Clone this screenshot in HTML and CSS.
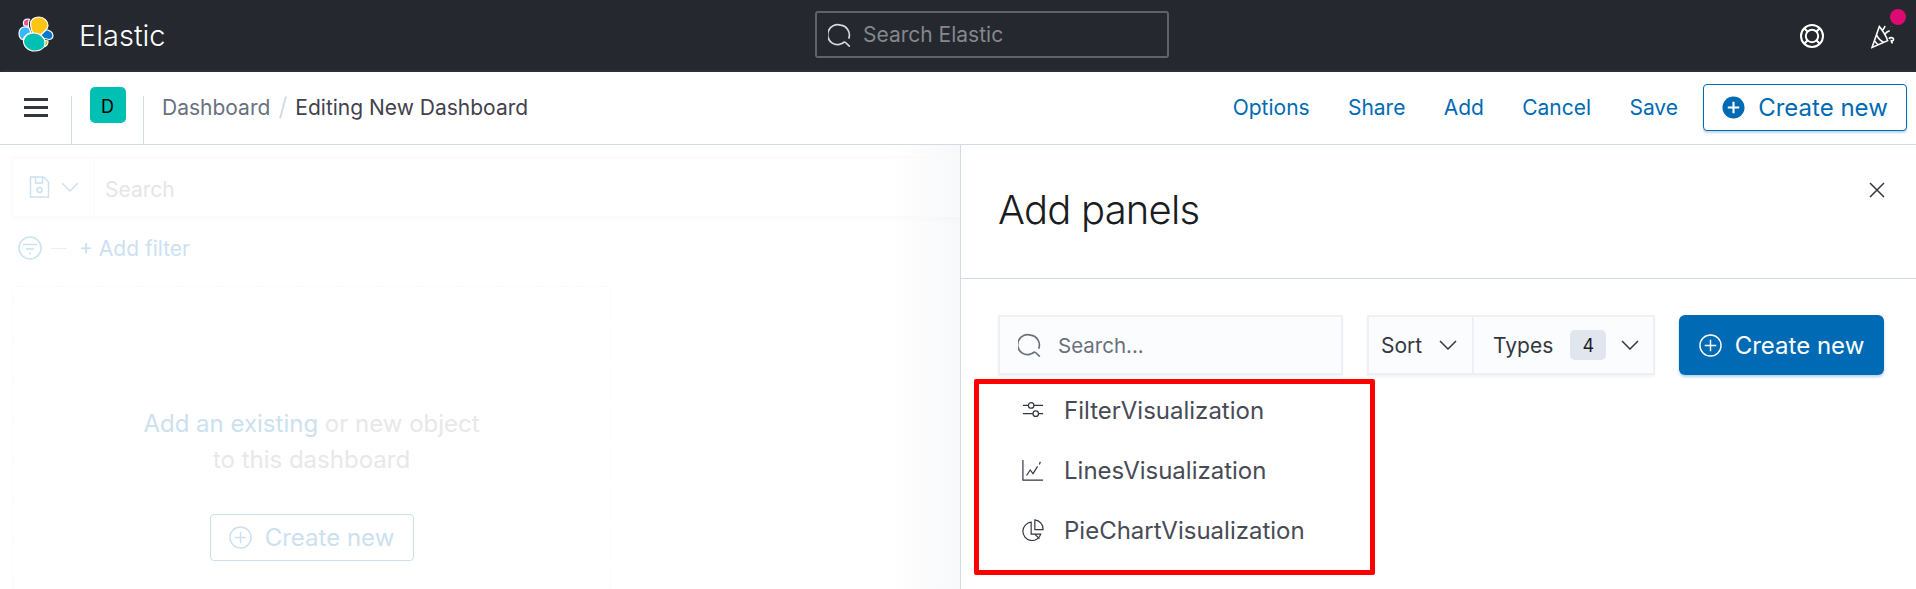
FILE: index.html
```html
<!DOCTYPE html>
<html lang="en">

<head>
	<meta charset="UTF-8">
	<meta name="viewport" content="width=device-width, initial-scale=1.0">
	<title>Editing New Dashboard - Elastic</title>
	<link rel="stylesheet" href="styles.css">
</head>

<body>

	<!-- Dark top bar -->
	<header class="topbar">
		<div class="brand">
			<svg class="brand-logo" viewBox="0 0 36 36" aria-hidden="true">
				<path fill="#f04e98" d="M5.500 6C6 3.500 9 2.500 11.500 3.300 10.500 5 10 7.500 10.500 10.500L6 9.500C5.500 8.500 5.300 7 5.500 6z" />
				<path fill="#36b9ff" d="M1 17C1 13 4 10.800 7 10.800 8.500 10.800 10 11.200 11 12L13 16.500C9 17.500 6.500 20 5 23.800 2.500 23 1 20 1 17z" />
				<path fill="#0077cc" d="M27.500 13.500C31.500 14 35 16.500 35 19.500 35 21.500 33.500 23 31.500 23.500L24 22 22 19.800z" />
				<path fill="#93c90e" d="M23.500 24L30 25C30.300 28 28.500 31 25 31L24 30.500C24.500 28 24 26 23.500 24z" />
				<path fill="#fec514" d="M12.500 8C12.500 3.500 16.500 1 21 1 26 1 30 5 30 9.500 30 11.500 29 13 27.500 14.500 25 17 22.500 19 21 20 19 18 17 17 14.500 16.800 13.500 14 12.500 11 12.500 8z" />
				<path fill="#00bfb3" d="M5.500 24C7 19.500 11.500 17 16 17 22 17 27 21.500 27 27 27 28.500 26.500 30 26 31 24 33.500 20.500 35 16.500 35 10 35 5 30 5.500 24z" />
			</svg>
			<span class="brand-name">Elastic</span>
		</div>
		<div class="global-search">
			<svg class="icon-search" viewBox="0 0 24 24" aria-hidden="true">
				<path d="M16.800 18.700A10 10 0 1 1 12.500 2.100a10 10 0 0 1 8.200 13.500M17 19l4.800 4.600" />
			</svg>
			<span>Search Elastic</span>
		</div>
		<div class="top-actions">
			<svg class="icon-help" viewBox="0 0 24 24" aria-hidden="true">
				<circle cx="12" cy="12" r="11" />
				<circle cx="12" cy="12" r="6.200" />
				<path d="M4.200 4.200l3.500 3.500M19.800 4.200l-3.500 3.500M4.200 19.800l3.500-3.500M19.800 19.800l-3.500-3.500" />
			</svg>
			<span class="news">
				<svg class="icon-party" viewBox="0 0 24 24" aria-hidden="true">
					<path d="M8 2.500L1 22.500l15-6.500c-1-3-2-6-8-13.500zM5.300 10.500c1.500 3 3.300 6 7 7M3.300 16c1 1.500 2 3 4 4" />
					<path d="M11 6c1-1.500 2-2.500 2.500-4M13 10c2-2.500 3-3 5-3.500M16 4.500l.1.100M19 2.500l.1.100M20.500 5l.1.100M17 14c2-1.500 4-1 4.500 0 .5 1.500-.5 2.500-2 2 0 1 .5 2 1.500 2" />
				</svg>
				<span class="news-dot"></span>
			</span>
		</div>
	</header>

	<!-- Breadcrumb bar -->
	<nav class="navbar">
		<button class="nav-cell nav-toggle" aria-label="Toggle navigation">
			<span></span>
			<span></span>
			<span></span>
		</button>
		<div class="nav-cell nav-space">
			<span class="space-tile">D</span>
		</div>
		<div class="crumbs">
			<span class="crumb-link">Dashboard</span>
			<span class="crumb-sep"></span>
			<span class="crumb-current">Editing New Dashboard</span>
		</div>
		<ul class="menu">
			<li>Options</li>
			<li>Share</li>
			<li>Add</li>
			<li>Cancel</li>
			<li>Save</li>
		</ul>
		<button class="btn-outline btn-top">
			<svg class="icon-plus-filled" viewBox="0 0 24 24" aria-hidden="true">
				<circle cx="12" cy="12" r="11.500" />
				<path d="M12 6v12M6 12h12" />
			</svg>
			Create new
		</button>
	</nav>

	<div class="workspace">

		<!-- Dashboard behind the flyout, faded out -->
		<main class="dash">
			<div class="query-bar">
				<div class="query-save">
					<svg class="icon-save" viewBox="0 0 20 22" aria-hidden="true">
						<path d="M1 1h13l5 5v15H1zM6 1v6h7V1" />
						<circle cx="10" cy="14" r="2.500" />
					</svg>
					<svg class="icon-chevron" viewBox="0 0 18 10" aria-hidden="true">
						<path d="M1 1l8 8 8-8" />
					</svg>
				</div>
				<span class="query-text">Search</span>
			</div>
			<div class="filter-row">
				<svg class="icon-filter" viewBox="0 0 24 24" aria-hidden="true">
					<circle cx="12" cy="12" r="11" />
					<path d="M5 8.500h14M8 13h8M11 17.500h2" />
				</svg>
				<span class="filter-dash"></span>
				<span class="filter-add">+ Add filter</span>
			</div>
			<div class="empty-panel">
				<p class="empty-text"><span class="empty-link">Add an existing</span> or new object<br>to this dashboard</p>
				<button class="btn-outline btn-empty">
					<svg class="icon-plus" viewBox="0 0 24 24" aria-hidden="true">
						<circle cx="12" cy="12" r="11" />
						<path d="M12 6v12M6 12h12" />
					</svg>
					Create new
				</button>
			</div>
		</main>

		<!-- Add panels flyout -->
		<aside class="flyout">
			<div class="flyout-head">
				<h1>Add panels</h1>
				<svg class="icon-close" viewBox="0 0 16 16" aria-hidden="true">
					<path d="M1 1l14 14M15 1L1 15" />
				</svg>
			</div>
			<div class="flyout-body">
				<div class="tools">
					<div class="panel-search">
						<svg class="icon-search" viewBox="0 0 24 24" aria-hidden="true">
							<path d="M16.800 18.700A10 10 0 1 1 12.500 2.100a10 10 0 0 1 8.200 13.500M17 19l4.800 4.600" />
						</svg>
						<span>Search...</span>
					</div>
					<div class="filter-group">
						<div class="filter-item filter-sort">
							Sort
							<svg class="icon-chevron" viewBox="0 0 18 10" aria-hidden="true">
								<path d="M1 1l8 8 8-8" />
							</svg>
						</div>
						<div class="filter-item filter-types">
							Types
							<span class="count">4</span>
							<svg class="icon-chevron" viewBox="0 0 18 10" aria-hidden="true">
								<path d="M1 1l8 8 8-8" />
							</svg>
						</div>
					</div>
					<button class="btn-fill">
						<svg class="icon-plus" viewBox="0 0 24 24" aria-hidden="true">
							<circle cx="12" cy="12" r="11" />
							<path d="M12 6v12M6 12h12" />
						</svg>
						Create new
					</button>
				</div>
				<ul class="vis-list">
					<li>
						<svg class="icon-vis" viewBox="0 0 24 24" aria-hidden="true">
							<path d="M1 7h6M13 7h10M1 16h11M18 16h5" />
							<circle cx="10" cy="7" r="3" />
							<circle cx="15" cy="16" r="3" />
						</svg>
						FilterVisualization
					</li>
					<li>
						<svg class="icon-vis" viewBox="0 0 24 24" aria-hidden="true">
							<path d="M1 1v22h22" />
							<path d="M5 18l4-6 3 4 5-8M20 3l-1 3" />
						</svg>
						LinesVisualization
					</li>
					<li>
						<svg class="icon-vis" viewBox="0 0 24 24" aria-hidden="true">
							<path d="M10 3.500a10 10 0 1 0 10.500 13H10z" />
							<path d="M14 1v10.500h9A10 10 0 0 0 14 1zM14 16.500l5 5" />
						</svg>
						PieChartVisualization
					</li>
				</ul>
			</div>
			<div class="callout"></div>
		</aside>

	</div>

</body>

</html>
```

FILE: styles.css
```css
* {
	box-sizing: border-box;
}

html,
body {
	height: 100%;
}

body {
	margin: 0;
	height: 589px;
	overflow: hidden;
	font-family: Inter, "Liberation Sans", sans-serif;
	font-size: 21px;
	color: #343741;
	background-color: #fff;
}

svg {
	flex: none;
	display: block;
	fill: none;
	stroke: currentColor;
	stroke-width: 1.5;
}

button {
	font: inherit;
	cursor: pointer;
}

ul {
	list-style: none;
	margin: 0;
	padding: 0;
}

/* top bar */
.topbar {
	display: flex;
	align-items: center;
	height: 72px;
	background-color: #25282f;
	color: #fff;
}

.brand {
	display: flex;
	align-items: center;
	gap: 25px;
	width: 815px;
	padding-left: 18px;
}

.brand-logo {
	width: 36px;
	height: 36px;
	margin-bottom: 4px;
	stroke: #fff;
	stroke-width: 1.200;
	overflow: visible;
}

.brand-name {
	font-size: 29px;
	font-weight: 300;
	margin-bottom: 2px;
}

.global-search {
	display: flex;
	align-items: center;
	gap: 11px;
	width: 354px;
	height: 47px;
	margin-bottom: 3px;
	padding-left: 11px;
	border: 2px solid #5f6269;
	border-radius: 3px;
	color: #84878c;
}

.global-search .icon-search {
	color: #d8d9db;
}

.icon-search {
	width: 24px;
	height: 24px;
	stroke-width: 1.700;
}

.top-actions {
	display: flex;
	align-items: center;
	gap: 47px;
	margin-left: auto;
	padding-right: 20px;
}

.icon-help {
	width: 24px;
	height: 24px;
	stroke-width: 2;
}

.news {
	position: relative;
	display: block;
}

.icon-party {
	width: 25px;
	height: 25px;
	stroke-width: 1.500;
}

.news-dot {
	position: absolute;
	top: -15px;
	right: -10px;
	width: 16px;
	height: 16px;
	border-radius: 50%;
	background-color: #dd0a73;
}

/* breadcrumb bar */
.navbar {
	display: flex;
	align-items: center;
	height: 73px;
	border-bottom: 1px solid #d3dae6;
	box-shadow: 0 2px 6px rgba(152, 162, 179, 0.35);
	position: relative;
}

.nav-cell {
	display: flex;
	align-items: center;
	justify-content: center;
	align-self: flex-end;
	height: 48px;
	border: 0;
	background: none;
	border-right: 1px solid #d3dae6;
	padding: 0;
}

.nav-toggle {
	flex-direction: column;
	gap: 5px;
	width: 72px;
	padding-bottom: 25px;
}

.nav-toggle span {
	width: 24px;
	height: 3px;
	background-color: #343741;
}

.nav-space {
	width: 72px;
	padding-bottom: 0;
}

.space-tile {
	display: flex;
	align-items: center;
	justify-content: center;
	width: 36px;
	height: 36px;
	margin-top: -30px;
	padding-top: 2px;
	border-radius: 5px;
	background-color: #00bfb3;
	color: #000;
	font-size: 18px;
}

.crumbs {
	display: flex;
	align-items: center;
	margin-bottom: 2px;
	padding-left: 18px;
}

.crumb-link {
	color: #69707d;
}

.crumb-sep {
	width: 2px;
	height: 23px;
	margin: 0 11.500px;
	background-color: #d3dae6;
	transform: rotate(15deg);
}

.crumb-current {
	color: #3f424c;
}

.menu {
	display: flex;
	gap: 38.300px;
	margin: 0 25px 2px auto;
	color: #006bb4;
}

.btn-outline {
	display: flex;
	align-items: center;
	justify-content: center;
	gap: 13px;
	width: 204px;
	height: 47px;
	border: 1px solid #006bb4;
	border-radius: 4px;
	background-color: #fff;
	color: #006bb4;
	box-shadow: 0 2px 2px rgba(0, 107, 180, 0.25);
}

.btn-top {
	margin-right: 9px;
	margin-top: -2px;
	font-size: 24px;
}

.icon-plus-filled {
	width: 23px;
	height: 23px;
	fill: #006bb4;
	stroke: #fff;
	stroke-width: 2.200;
}

.icon-plus-filled circle {
	stroke: none;
}

.icon-plus {
	width: 23px;
	height: 23px;
}

/* faded dashboard */
.workspace {
	display: flex;
	height: 444px;
}

.dash {
	position: relative;
	width: 960px;
	flex: none;
	padding: 12px 0 0 12px;
	background: linear-gradient(to right, #fff 93%, #f7f8fa);
}

.query-bar {
	display: flex;
	align-items: center;
	height: 60px;
	border: 1px solid #fafafb;
	border-right: 0;
	box-shadow: 0 2px 4px rgba(152, 162, 179, 0.05);
}

.query-save {
	display: flex;
	align-items: center;
	gap: 11px;
	width: 82px;
	height: 100%;
	padding-left: 16px;
	border-right: 1px solid #f8f9fa;
	color: #cce1f0;
}

.icon-save {
	width: 21px;
	height: 22px;
}

.icon-chevron {
	width: 18px;
	height: 10px;
}

.query-text {
	margin: 4px 0 0 10px;
	color: #e5e6e8;
}

.filter-row {
	display: flex;
	align-items: center;
	height: 46px;
	margin-top: 8px;
	padding-left: 6px;
	color: #cce1f0;
}

.icon-filter {
	width: 24px;
	height: 24px;
}

.filter-dash {
	width: 16px;
	height: 1px;
	margin: 0 12px 0 9px;
	background-color: #eceef1;
}

.empty-panel {
	display: flex;
	flex-direction: column;
	align-items: center;
	width: 599px;
	height: 320px;
	margin-top: 15px;
	padding-top: 119px;
	border: 1px dashed #f8f9fa;
	border-bottom: 0;
	border-radius: 4px 4px 0 0;
}

.empty-text {
	margin: 0;
	text-align: center;
	line-height: 36px;
	font-size: 24px;
	color: #e8e8ea;
}

.empty-link {
	color: #cce1f0;
}

.btn-empty {
	margin-top: 36px;
	border-color: #cce1f0;
	color: #cce1f0;
	box-shadow: none;
	font-size: 24px;
}

/* flyout */
.flyout {
	position: relative;
	flex: 1;
	border-left: 1px solid #d3dae6;
	background-color: #fff;
}

.flyout-head {
	position: relative;
	height: 134px;
	padding: 37px 0 0 37px;
	border-bottom: 1px solid #d3dae6;
}

.flyout-head h1 {
	margin: 0;
	font-size: 40px;
	font-weight: 300;
	line-height: 56px;
	letter-spacing: -0.800px;
	color: #1a1c21;
}

.icon-close {
	position: absolute;
	top: 37px;
	right: 31px;
	width: 16px;
	height: 16px;
}

.flyout-body {
	padding: 36px 32px 0 37px;
}

.tools {
	display: flex;
	height: 60px;
}

.panel-search {
	display: flex;
	align-items: center;
	gap: 16px;
	width: 345px;
	padding-left: 18px;
	border: 2px solid #eef0f5;
	background-color: #fbfcfd;
	color: #69707d;
	font-size: 20.500px;
	box-shadow: 0 2px 2px rgba(152, 162, 179, 0.12);
}

.filter-group {
	display: flex;
	width: 288px;
	margin-left: 24px;
	border: 2px solid #eef0f5;
	background-color: #fbfcfd;
	box-shadow: 0 2px 2px rgba(152, 162, 179, 0.12);
}

.filter-item {
	display: flex;
	align-items: center;
}

.filter-sort {
	width: 105px;
	padding-left: 12px;
	gap: 17px;
	border-right: 2px solid #eef0f5;
}

.filter-types {
	padding-left: 19px;
}

.count {
	display: flex;
	align-items: center;
	justify-content: center;
	width: 36px;
	height: 30px;
	margin: 0 15px 0 17px;
	border-radius: 5px;
	background-color: #e0e5ee;
	color: #1a1c21;
	font-size: 18px;
}

.btn-fill {
	display: flex;
	align-items: center;
	justify-content: center;
	gap: 13px;
	width: 205px;
	margin-left: 24px;
	border: 0;
	border-radius: 6px;
	background-color: #006bb4;
	color: #fff;
	font-size: 24px;
	box-shadow: 0 2px 3px rgba(0, 107, 180, 0.3);
}

.vis-list {
	margin-top: 5px;
	padding-left: 24px;
	font-size: 24px;
	color: #484b55;
}

.vis-list li {
	display: flex;
	align-items: center;
	gap: 20px;
	height: 60px;
}

.icon-vis {
	width: 22px;
	height: 22px;
	stroke-width: 1.300;
	color: #343741;
}

/* red annotation drawn over the screenshot */
.callout {
	position: absolute;
	top: 234px;
	left: 13px;
	width: 401px;
	height: 196px;
	border: 5px solid #f00;
	border-radius: 2px;
}
```
